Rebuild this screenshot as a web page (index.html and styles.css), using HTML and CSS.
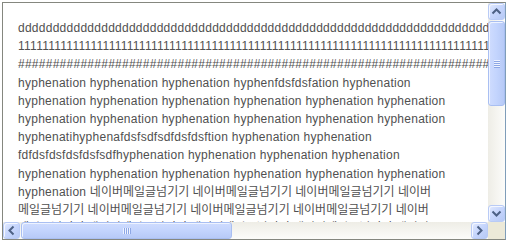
FILE: index.html
```html
<!DOCTYPE html>
<html lang="ko">
<head>
<meta charset="utf-8">
<title>Textarea</title>
<link rel="stylesheet" href="styles.css">
</head>
<body>
<div class="textbox">
  <div class="viewport">
    <div class="text">
      <div class="line">dddddddddddddddddddddddddddddddddddddddddddddddddddddddddddddddddddddddddddddddddddddddddd</div>
      <div class="line">111111111111111111111111111111111111111111111111111111111111111111111111111111111111111111111111111111</div>
      <div class="line">##########################################################################################</div>
      <div class="line">hyphenation hyphenation hyphenation hyphenfdsfdsfation hyphenation</div>
      <div class="line">hyphenation hyphenation hyphenation hyphenation hyphenation hyphenation</div>
      <div class="line">hyphenation hyphenation hyphenation hyphenation hyphenation hyphenation</div>
      <div class="line">hyphenatihyphenafdsfsdfsdfdsfdsftion hyphenation hyphenation</div>
      <div class="line">fdfdsfdsfdsfdsfsdfhyphenation hyphenation hyphenation hyphenation</div>
      <div class="line">hyphenation hyphenation hyphenation hyphenation hyphenation hyphenation</div>
      <div class="line">hyphenation <span class="ko">네이버메일글넘기기 네이버메일글넘기기 네이버메일글넘기기 네이버</span></div>
      <div class="line"><span class="ko">메일글넘기기 네이버메일글넘기기 네이버메일글넘기기 네이버메일글넘기기 네이버</span></div>
      <div class="line"><span class="ko">메일글넘기기 네이버메일글넘기기 네이버메일글넘기기 네이버메일글넘기기 네이버</span></div>
    </div>
  </div>
  <div class="vbar">
    <div class="btn"><svg width="15" height="15" viewBox="0 0 15 15"><polyline points="3.5,9.5 7.5,5.5 11.5,9.5" /></svg></div>
    <div class="thumb vthumb"><span class="grip vgrip"></span></div>
    <div class="track"></div>
    <div class="btn"><svg width="15" height="15" viewBox="0 0 15 15"><polyline points="3.5,5.5 7.5,9.5 11.5,5.5" /></svg></div>
  </div>
  <div class="hbar">
    <div class="btn"><svg width="15" height="15" viewBox="0 0 15 15"><polyline points="9.5,3.5 5.5,7.5 9.5,11.5" /></svg></div>
    <div class="thumb hthumb"><span class="grip hgrip"></span></div>
    <div class="track"></div>
    <div class="btn"><svg width="15" height="15" viewBox="0 0 15 15"><polyline points="5.5,3.5 9.5,7.5 5.5,11.5" /></svg></div>
  </div>
  <div class="corner"></div>
</div>
</body>
</html>
```
FILE: styles.css
```css
html, body {
  margin: 0;
  padding: 0;
  background: #ffffff;
}

.textbox {
  margin: 2px;
  width: 504px;
  height: 238px;
  box-sizing: border-box;
  border: 1px solid;
  border-color: #85877f #7f9db9 #85877f #85877f;
  display: grid;
  grid-template-columns: 1fr 17px;
  grid-template-rows: 1fr 17px;
  background: #ffffff;
}

.viewport {
  overflow: hidden;
  padding: 16px 0 0 15px;
  font-family: "Liberation Sans", "Noto Sans CJK KR", sans-serif;
  font-size: 12px;
  line-height: 18.2px;
  letter-spacing: 0.26px;
  color: #505050;
  white-space: nowrap;
}

.line {
  height: 18.2px;
}

.ko {
  font-family: "Noto Sans CJK KR", sans-serif;
  font-size: 12px;
  line-height: 12px;
  letter-spacing: 0;
}

.vbar {
  display: flex;
  flex-direction: column;
  background: linear-gradient(to right, #eeede6, #fcfcfa);
}

.hbar {
  display: flex;
  background: linear-gradient(to bottom, #eeede6, #fcfcfa);
}

.track {
  flex: 1;
}

.btn {
  width: 17px;
  height: 17px;
  flex: none;
  box-sizing: border-box;
  border: 1px solid #b9cbf6;
  border-radius: 3px;
  background: linear-gradient(135deg, #e2eafe 0%, #c8d7fd 45%, #b6c9f6 100%);
  box-shadow: inset 1px 1px 0 #f4f7ff;
  display: flex;
  align-items: center;
  justify-content: center;
}

.btn svg polyline {
  fill: none;
  stroke: #4d6185;
  stroke-width: 2;
}

.thumb {
  flex: none;
  box-sizing: border-box;
  border: 1px solid #a9bff2;
  border-radius: 3px;
  box-shadow: inset 1px 1px 0 #eef3ff;
  display: flex;
  align-items: center;
  justify-content: center;
}

.vthumb {
  height: 85px;
  margin-top: 1px;
  background: linear-gradient(to right, #cfdcfe, #c3d4fd 50%, #b7caf7);
}

.hthumb {
  width: 211px;
  margin-left: 1px;
  background: linear-gradient(to bottom, #cfdcfe, #c3d4fd 50%, #b7caf7);
}

.grip {
  display: block;
}

.vgrip {
  width: 6px;
  height: 8px;
  background: repeating-linear-gradient(to bottom, #eef3ff 0 1px, #8da7e5 1px 2px);
}

.hgrip {
  width: 8px;
  height: 6px;
  background: repeating-linear-gradient(to right, #eef3ff 0 1px, #8da7e5 1px 2px);
}

.corner {
  background: #ece9d8;
}
```
